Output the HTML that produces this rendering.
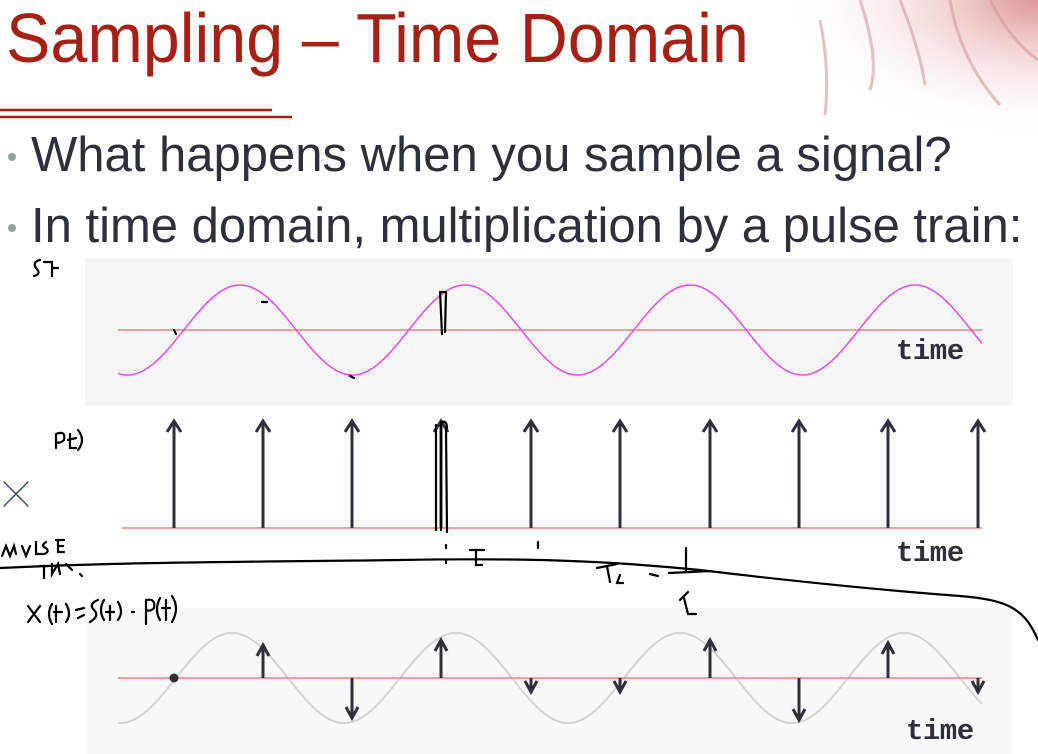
<!DOCTYPE html>
<html><head><meta charset="utf-8"><style>
html,body{margin:0;padding:0;background:#fff;}
body{width:1038px;height:754px;position:relative;overflow:hidden;font-family:"Liberation Sans",sans-serif;}
.t{position:absolute;white-space:nowrap;}
.b{position:absolute;width:8px;height:8px;border-radius:50%;background:#93a39b;}
.tm{font:bold 29px 'Liberation Mono',monospace;color:#2d2f3a;letter-spacing:-0.5px}
</style></head><body>
<svg width="1038" height="754" style="position:absolute;left:0;top:0">
<defs>
<radialGradient id="g" cx="1" cy="0" r="1">
<stop offset="0" stop-color="#d88a8a" stop-opacity="0.9"/>
<stop offset="0.5" stop-color="#f0caca" stop-opacity="0.5"/>
<stop offset="1" stop-color="#fff" stop-opacity="0"/>
</radialGradient>
</defs>
<rect x="780" y="0" width="258" height="140" fill="url(#g)"/>
<g stroke="#d79a9a" stroke-width="3" fill="none" opacity="0.6">
<path d="M860 0 Q880 60 870 90"/><path d="M900 0 Q920 50 925 85"/><path d="M950 0 Q960 60 1000 105"/><path d="M990 0 Q1010 40 1038 60"/><path d="M820 20 Q830 70 825 115"/>
</g>
<line x1="0" y1="110" x2="272" y2="110" stroke="#a52015" stroke-width="2.5"/>
<line x1="0" y1="117" x2="292" y2="117" stroke="#a52015" stroke-width="2.5"/>
<rect x="85" y="258" width="928" height="148" fill="#f6f6f6"/>
<rect x="85" y="608" width="928" height="146" fill="#f8f8f8"/>
<line x1="118" y1="330" x2="982" y2="330" stroke="#f08080" stroke-width="1.5"/>
<path id="s1" fill="none" stroke="#e050e0" stroke-width="1.5" d=""/>
<line x1="122" y1="528" x2="982" y2="528" stroke="#f08080" stroke-width="1.5"/>
<g stroke="#2d2f3a" stroke-width="3" fill="none" id="arr"></g>
<path id="s2" fill="none" stroke="#d4d4d4" stroke-width="2" d=""/>
<line x1="118" y1="678" x2="982" y2="678" stroke="#f08080" stroke-width="1.5"/>
<g stroke="#2d2f3a" stroke-width="3" fill="none" id="arr2"></g>
<g stroke="#000" stroke-width="2.2" fill="none" stroke-linecap="round">
<path d="M0 568 C120 562 250 562 400 560 C520 558 600 560 700 570 C800 582 880 590 960 596 C1010 600 1025 610 1038 640"/>
<path d="M174 330 l2 4 M262 302 l5 0 M350 376 l4 2"/>
<path d="M440 292 l2 42 M446 292 l-1 40 M440 292 l6 0"/>
<path d="M436 425 l0 105 M441 422 l0 108 M446 428 l1 104 M441 422 q6 -2 6 6"/>
<path d="M446 545 l0 3 M446 560 l0 3 M538 542 l0 6"/>
<path d="M470 550 l14 0 M476 550 l0 15 l6 0"/>
<path d="M597 568 l20 -4 M607 566 l3 16 M620 575 l-3 8 l6 0"/>
<path d="M650 574 l8 2 M669 573 l42 -2 M686 548 l0 23 M680 600 l8 -8 M684 598 l4 16 l8 0"/>
<path d="M40 260 q-8 2 -4 8 q6 6 -2 8 M44 262 l8 0 l0 14 M52 268 l6 0"/>
<path d="M56 448 l0 -14 q10 -4 8 6 q-4 4 -8 2 M70 434 l0 14 l6 0 M68 440 l8 -2 M78 430 q8 10 0 20"/>
<path d="M4 482 l24 24 M28 482 l-24 24" stroke="#3a4a6a" stroke-width="1.5"/>
<path d="M2 556 l4 -10 l4 10 l4 -10 l2 8 M22 546 l4 10 l4 -10 M36 542 l0 12 l6 0 M46 542 q-6 4 0 6 q4 4 -2 6 M56 540 l8 0 M58 540 l0 12 l6 0 M58 546 l5 0"/>
<path d="M40 566 l8 0 M44 566 l0 12 M52 564 l0 10 l6 -10 l2 10 M66 564 l6 6 M80 574 l2 2"/>
<path d="M28 606 l12 16 M40 606 l-12 16 M52 604 q-6 10 0 20 M56 606 l0 16 M54 612 l8 0 M66 604 q6 10 0 18 M76 610 l8 -2 M78 618 l6 -3 M98 600 q-10 4 -4 10 q6 6 -4 12 M104 600 q-6 10 0 20 M110 606 l0 14 M106 612 l8 0 M118 602 q6 10 0 18 M132 612 l2 0 M146 600 l0 24 M146 600 q10 -2 8 8 q-4 4 -8 2 M160 598 q-6 12 0 22 M166 600 l0 20 M162 608 l8 0 M172 596 q8 12 0 26"/>
</g>
</svg>
<div class="t" style="left:6px;top:-2px;font-size:70px;color:#a52015;transform:scaleX(0.95);transform-origin:0 0;">Sampling – Time Domain</div>
<div class="b" style="left:8px;top:153px"></div>
<div class="b" style="left:8px;top:224px"></div>
<div class="t" style="left:31px;top:127px;font-size:49px;color:#2d2f3a;">What happens when you sample a signal?</div>
<div class="t" style="left:31px;top:198px;font-size:49px;color:#2d2f3a;">In time domain, multiplication by a pulse train:</div>
<div class="t tm" style="left:896px;top:335px;">time</div>
<div class="t tm" style="left:896px;top:537px;">time</div>
<div class="t tm" style="left:906px;top:715px;">time</div>
<script>
function sine(id,cy,amp,p0,per){var d="";for(var x=118;x<=982;x+=2){var y=cy-amp*Math.cos(2*Math.PI*(x-p0)/per);d+=(x==118?"M":"L")+x+" "+y.toFixed(1)+" ";}document.getElementById(id).setAttribute("d",d);}
sine("s1",330,45,240,225);sine("s2",678,45,232,224);
var xs=[174,263,352,441,531,620,710,799,888,978];
var tops=[null,645,718,640,692,692,640,720,643,692];
var a=document.getElementById("arr"),a2=document.getElementById("arr2"),h="",h2="";
xs.forEach(function(x,i){h+='<path d="M'+x+' 528 L'+x+' 422 M'+(x-7)+' 432 L'+x+' 421 L'+(x+7)+' 432"/>';
var yt=tops[i];
if(yt===null){h2+='<circle cx="'+x+'" cy="678" r="3" fill="#2d2f3a"/>';return;}
var dir=yt<678?1:-1;h2+='<path d="M'+x+' 678 L'+x+' '+yt+' M'+(x-6)+' '+(yt+dir*11)+' L'+x+' '+yt+' L'+(x+6)+' '+(yt+dir*11)+'"/>';});
a.innerHTML=h;a2.innerHTML=h2;
</script>
</body></html>
